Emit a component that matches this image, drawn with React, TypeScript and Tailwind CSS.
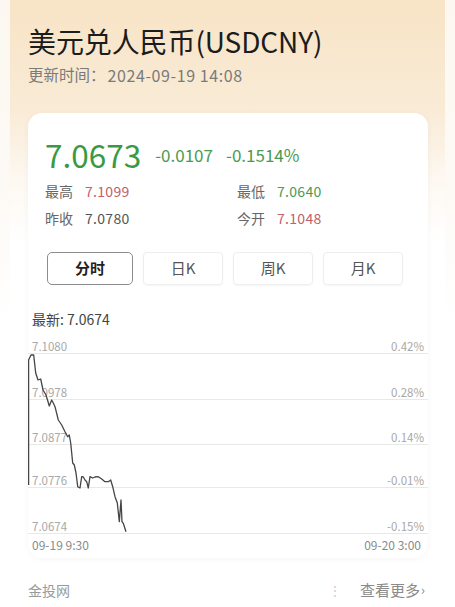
const gridRows = [
  { left: "7.1080", right: "0.42%", h: "h-[14px]" },
  { left: "7.0978", right: "0.28%", h: "h-[46px]" },
  { left: "7.0877", right: "0.14%", h: "h-[45px]" },
  { left: "7.0776", right: "-0.01%", h: "h-[43px]" },
  { left: "7.0674", right: "-0.15%", h: "h-[46px]" },
];

const tabs = [
  { label: "分时", active: true, w: "w-[86px]" },
  { label: "日K", active: false, w: "w-[80px]" },
  { label: "周K", active: false, w: "w-[80px]" },
  { label: "月K", active: false, w: "w-[80px]" },
];

// price line, coords relative to the chart box (396 x 194)
const pts: [number, number][] = [
  [0.6, 145], [0.6, 20], [3, 15], [5.7, 15], [7.7, 33], [10, 40], [12.7, 39], [15, 50],
  [18, 55], [21.3, 66], [23.7, 60], [25.3, 63], [27, 66.7], [30.3, 80], [33.7, 85],
  [37, 91.7], [39.7, 96.7], [41.3, 95], [42.7, 103], [44.7, 123], [46.3, 125], [48, 133],
  [49.7, 146.7], [52, 148], [53.7, 136.7], [55.3, 137], [57, 140], [58.7, 141.7],
  [60.3, 148], [62, 136.7], [64.7, 138], [67, 137], [70.3, 136.7], [73.7, 139],
  [77, 141.7], [80.3, 141.7], [82.7, 140], [84.7, 146.7], [87, 156.7], [89.3, 163],
  [91.3, 181.7], [93, 160], [94, 181.7], [95.3, 183.3], [98, 191.7],
];

export default function App() {
  return (
    <div className="min-h-[607px] w-[455px] bg-[linear-gradient(180deg,#fcf8f1_0px,#fdfaf6_200px,#ffffff_320px)] font-['Noto_Sans_CJK_SC','Noto_Sans',sans-serif] px-[10px]">
      <div className="min-h-[607px] bg-[linear-gradient(180deg,#f8e4c6_0px,#f9ebd6_110px,#fdf8f1_180px,#ffffff_240px)] pl-[18px] pr-[17px] pt-[23px]">
        {/* header */}
        <h1 className="h-[36px] flex items-center text-[28px] leading-none text-[#1c1c1c] tracking-[-0.1px]">
          美元兑人民币(USDCNY)
        </h1>
        <div className="mt-[6px] h-[20px] flex items-center text-[15.5px] text-[#7a7a7a]">
          <span>更新时间：</span>
          <span className="ml-[2px] text-[16px] tracking-[0.6px]">2024-09-19 14:08</span>
        </div>

        {/* quote card */}
        <div className="mt-[28px] bg-white rounded-[14px] shadow-[0_1px_6px_rgba(0,0,0,0.04)] pb-[2px]">
          <div className="pt-[22px] px-[17px]">
            <div className="h-[40px] flex items-center">
              <span className="text-[31.5px] leading-none text-[#3a9a43]">7.0673</span>
              <span className="ml-[14px] text-[17px] text-[#4a9a52]">-0.0107</span>
              <span className="ml-[13px] text-[17px] text-[#4a9a52]">-0.1514%</span>
            </div>
            <div className="mt-[5px] flex flex-col gap-[5px] text-[14px]">
              <div className="h-[22px] flex items-center">
                <div className="w-[192px] flex items-center">
                  <span className="text-[#666]">最高</span>
                  <span className="ml-[12px] text-[#c2606b] tracking-[0.3px]">7.1099</span>
                </div>
                <span className="text-[#666]">最低</span>
                <span className="ml-[12px] text-[#4a9a52] tracking-[0.3px]">7.0640</span>
              </div>
              <div className="h-[22px] flex items-center">
                <div className="w-[192px] flex items-center">
                  <span className="text-[#666]">昨收</span>
                  <span className="ml-[12px] text-[#555] tracking-[0.3px]">7.0780</span>
                </div>
                <span className="text-[#666]">今开</span>
                <span className="ml-[12px] text-[#c2606b] tracking-[0.3px]">7.1048</span>
              </div>
            </div>
          </div>

          {/* tabs */}
          <div className="mt-[23px] pl-[19px] flex gap-[10px]">
            {tabs.map((t) => (
              <div
                key={t.label}
                className={
                  t.active
                    ? `${t.w} h-[33px] flex items-center justify-center rounded-[5px] border border-[#8c8c8c] text-[15px] font-bold text-[#222]`
                    : `${t.w} h-[33px] flex items-center justify-center rounded-[4px] border border-[#eeeeee] shadow-[0_1px_2px_rgba(0,0,0,0.04)] text-[15px] text-[#555]`
                }
              >
                {t.label}
              </div>
            ))}
          </div>

          {/* chart */}
          <div className="mt-[24px] h-[20px] pl-[4px] flex items-center text-[14px] text-[#444]">最新: 7.0674</div>
          <div className="relative mt-[11px]">
            {gridRows.map((r) => (
              <div
                key={r.left}
                className={`${r.h} flex items-end justify-between border-b border-[#e8e8e8] px-[4px] text-[11.5px] leading-[14px] text-[#a8a8a8]`}
              >
                <span>{r.left}</span>
                <span>{r.right}</span>
              </div>
            ))}
            <svg className="absolute left-0 top-0" width="396" height="195" viewBox="0 0 396 195">
              <polyline
                points={pts.map(([x, y]) => `${x},${y}`).join(" ")}
                fill="none"
                stroke="#454545"
                strokeWidth="1.3"
                strokeLinejoin="round"
              />
            </svg>
          </div>
          <div className="h-[22px] flex items-center justify-between pl-[4px] pr-[7px] text-[12px] text-[#8a8a8a]">
            <span>09-19 9:30</span>
            <span>09-20 3:00</span>
          </div>
        </div>

        {/* footer */}
        <div className="mt-[22px] h-[20px] flex items-center text-[14px] text-[#9a9a9a]">
          <span>金投网</span>
          <span className="ml-auto text-[#d0d0d0] text-[14px]">⋮</span>
          <span className="ml-[18px] mr-[3px] flex items-center text-[15px] text-[#8a8a8a]">
            查看更多<span className="ml-[1px] text-[13px]">›</span>
          </span>
        </div>
      </div>
    </div>
  );
}
